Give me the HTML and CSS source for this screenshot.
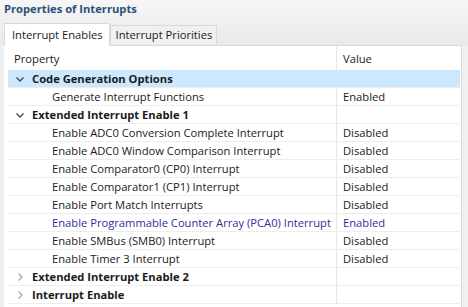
FILE: index.html
```html
<!DOCTYPE html>
<html lang="en">
<head>
    <meta charset="UTF-8">
    <title>Properties of Interrupts</title>
    <link rel="stylesheet" href="styles.css">
</head>
<body>
    <div class="title">Properties of Interrupts</div>
    <div class="tabs">
        <div class="tab active">Interrupt Enables</div>
        <div class="tab">Interrupt Priorities</div>
    </div>
    <div class="panel">
        <div class="head">
            <div class="prop">Property</div>
            <div class="val">Value</div>
        </div>
        <div class="tree">
            <div class="row group selected">
                <div class="prop">
                    <svg class="arrow" width="10" height="10" viewBox="0 0 10 10"><path d="M1.5 3.5 L5 7 L8.5 3.5" fill="none" stroke="#4a4a4a" stroke-width="1.4"/></svg>
                    Code Generation Options
                </div>
                <div class="val"></div>
            </div>
            <div class="row">
                <div class="prop child">Generate Interrupt Functions</div>
                <div class="val">Enabled</div>
            </div>
            <div class="row group">
                <div class="prop">
                    <svg class="arrow" width="10" height="10" viewBox="0 0 10 10"><path d="M1.5 3.5 L5 7 L8.5 3.5" fill="none" stroke="#4a4a4a" stroke-width="1.4"/></svg>
                    Extended Interrupt Enable 1
                </div>
                <div class="val"></div>
            </div>
            <div class="row">
                <div class="prop child">Enable ADC0 Conversion Complete Interrupt</div>
                <div class="val">Disabled</div>
            </div>
            <div class="row">
                <div class="prop child">Enable ADC0 Window Comparison Interrupt</div>
                <div class="val">Disabled</div>
            </div>
            <div class="row">
                <div class="prop child">Enable Comparator0 (CP0) Interrupt</div>
                <div class="val">Disabled</div>
            </div>
            <div class="row">
                <div class="prop child">Enable Comparator1 (CP1) Interrupt</div>
                <div class="val">Disabled</div>
            </div>
            <div class="row">
                <div class="prop child">Enable Port Match Interrupts</div>
                <div class="val">Disabled</div>
            </div>
            <div class="row changed">
                <div class="prop child">Enable Programmable Counter Array (PCA0) Interrupt</div>
                <div class="val">Enabled</div>
            </div>
            <div class="row">
                <div class="prop child">Enable SMBus (SMB0) Interrupt</div>
                <div class="val">Disabled</div>
            </div>
            <div class="row">
                <div class="prop child">Enable Timer 3 Interrupt</div>
                <div class="val">Disabled</div>
            </div>
            <div class="row group">
                <div class="prop">
                    <svg class="arrow" width="10" height="10" viewBox="0 0 10 10"><path d="M3.5 1.5 L7 5 L3.5 8.5" fill="none" stroke="#a6a6a6" stroke-width="1.2"/></svg>
                    Extended Interrupt Enable 2
                </div>
                <div class="val"></div>
            </div>
            <div class="row group">
                <div class="prop">
                    <svg class="arrow" width="10" height="10" viewBox="0 0 10 10"><path d="M3.5 1.5 L7 5 L3.5 8.5" fill="none" stroke="#a6a6a6" stroke-width="1.2"/></svg>
                    Interrupt Enable
                </div>
                <div class="val"></div>
            </div>
        </div>
    </div>
</body>
</html>
```

FILE: styles.css
```css
* {
    box-sizing: border-box;
}
body {
    margin: 0;
    height: 307px;
    overflow: hidden;
    font-family: 'Open Sans', sans-serif;
    font-size: 11.2px;
    color: #1a1a1a;
    background: linear-gradient(#f6f6f6, #e9e9e9 45px, #f0f0f0 46px);
}
.title {
    height: 20px;
    line-height: 17px;
    padding-left: 4px;
    font-weight: bold;
    font-size: 11.2px;
    color: #2c4f7c;
}
.tabs {
    display: flex;
    align-items: flex-end;
    height: 25px;
    padding-left: 4px;
    position: relative;
    z-index: 1;
}
.tab {
    height: 19px;
    line-height: 18px;
    padding: 0 4px 0 5px;
    border: 1px solid #d9d9d9;
    border-bottom: none;
    background: #f0f0f0;
    margin-bottom: 1px;
}
.tab.active {
    height: 23px;
    line-height: 22px;
    background: #fff;
    margin-bottom: -1px;
    padding: 0 6px 0 7px;
}
.panel {
    margin-left: 4px;
    width: 458px;
    height: 270px;
    background: #fff;
    border-top: 1px solid #dadada;
    border-right: 1px solid #dadada;
}
.head {
    display: flex;
    height: 24px;
    line-height: 26px;
}
.head .prop {
    width: 333px;
    padding-left: 10px;
}
.prop {
    white-space: nowrap;
    overflow: hidden;
    border-right: 1px solid #e6e6e6;
}
.val {
    flex: 1;
    padding-left: 6px;
}
.tree {
    margin-left: 4px;
    margin-right: 1px;
}
.row {
    display: flex;
    height: 18px;
    line-height: 17px;
    border-bottom: 1px solid #ededed;
}
.row .prop {
    width: 329px;
}
.row.selected {
    background: #cce8ff;
}
.row.selected .prop {
    border-right-color: transparent;
}
.group .prop {
    display: flex;
    align-items: center;
    font-weight: bold;
    padding-left: 7px;
}
.row .child {
    padding-left: 44px;
}
.changed {
    color: #2e2e9c;
}
.arrow {
    flex: none;
    margin-right: 7px;
}
```
